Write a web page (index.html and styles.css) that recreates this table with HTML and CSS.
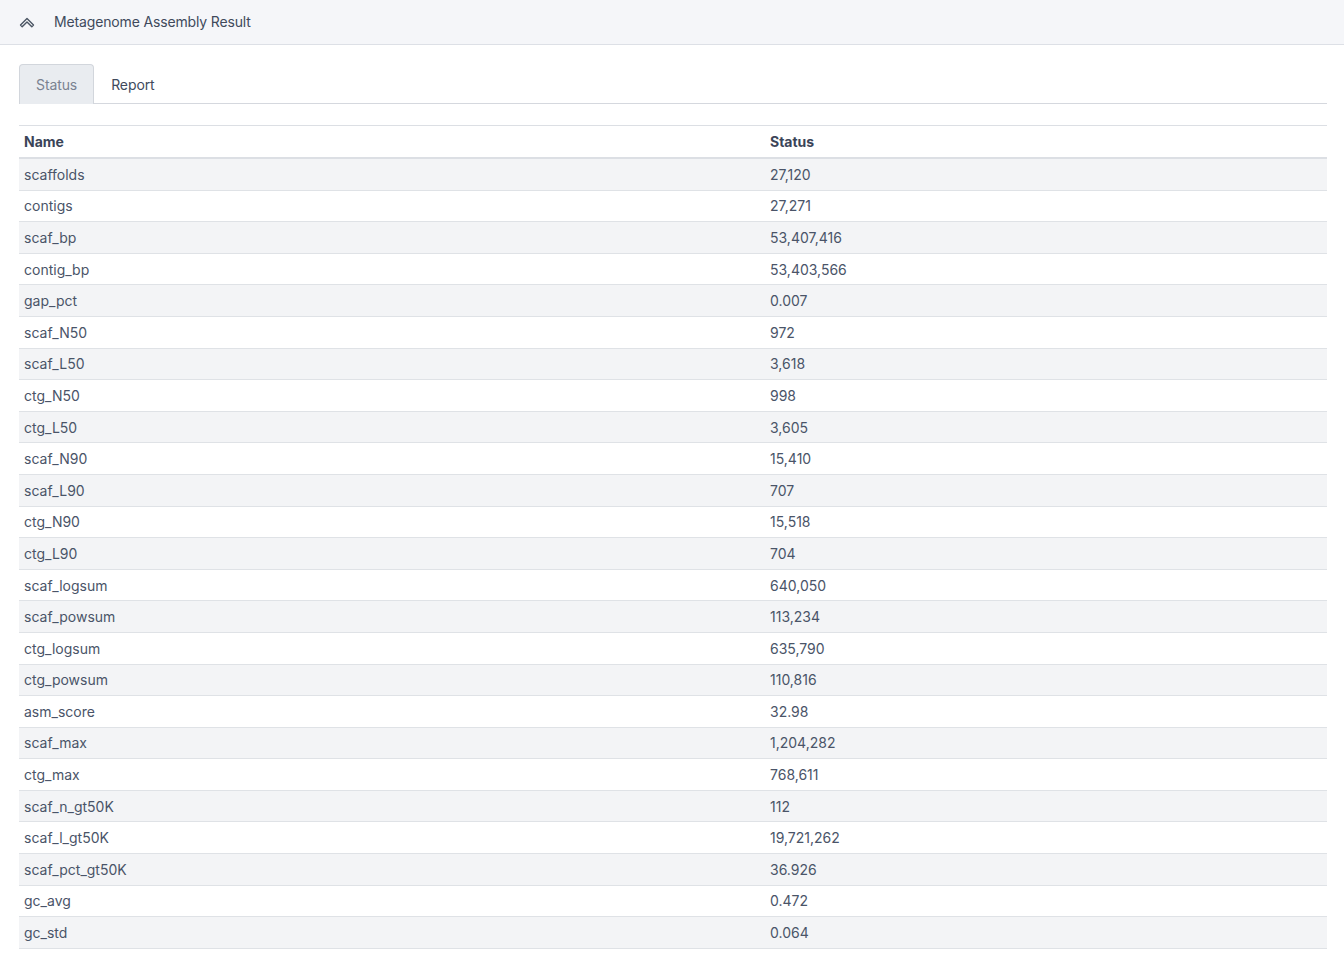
FILE: index.html
```html
<!DOCTYPE html>
<html>
<head>
<meta charset="utf-8">
<link rel="stylesheet" href="styles.css">
</head>
<body>
<header class="topbar">
  <svg class="icon" width="16" height="13" viewBox="0 0 16 13"><path d="M1.5 9 L8 2.5 L14.5 9 L12.8 10.7 L8 6 L3.2 10.7 Z" fill="none" stroke="#4b5563" stroke-width="1.4" stroke-linejoin="round"/></svg>
  <span class="title">Metagenome Assembly Result</span>
</header>
<main class="content">
  <nav class="tabs">
    <div class="tab active">Status</div>
    <div class="tab">Report</div>
  </nav>
  <table class="data">
    <thead><tr><th class="c1">Name</th><th>Status</th></tr></thead>
    <tbody>
      <tr><td>scaffolds</td><td>27,120</td></tr>
      <tr><td>contigs</td><td>27,271</td></tr>
      <tr><td>scaf_bp</td><td>53,407,416</td></tr>
      <tr><td>contig_bp</td><td>53,403,566</td></tr>
      <tr><td>gap_pct</td><td>0.007</td></tr>
      <tr><td>scaf_N50</td><td>972</td></tr>
      <tr><td>scaf_L50</td><td>3,618</td></tr>
      <tr><td>ctg_N50</td><td>998</td></tr>
      <tr><td>ctg_L50</td><td>3,605</td></tr>
      <tr><td>scaf_N90</td><td>15,410</td></tr>
      <tr><td>scaf_L90</td><td>707</td></tr>
      <tr><td>ctg_N90</td><td>15,518</td></tr>
      <tr><td>ctg_L90</td><td>704</td></tr>
      <tr><td>scaf_logsum</td><td>640,050</td></tr>
      <tr><td>scaf_powsum</td><td>113,234</td></tr>
      <tr><td>ctg_logsum</td><td>635,790</td></tr>
      <tr><td>ctg_powsum</td><td>110,816</td></tr>
      <tr><td>asm_score</td><td>32.98</td></tr>
      <tr><td>scaf_max</td><td>1,204,282</td></tr>
      <tr><td>ctg_max</td><td>768,611</td></tr>
      <tr><td>scaf_n_gt50K</td><td>112</td></tr>
      <tr><td>scaf_l_gt50K</td><td>19,721,262</td></tr>
      <tr><td>scaf_pct_gt50K</td><td>36.926</td></tr>
      <tr><td>gc_avg</td><td>0.472</td></tr>
      <tr><td>gc_std</td><td>0.064</td></tr>
    </tbody>
  </table>
</main>
</body>
</html>
```
FILE: styles.css
```css
* { box-sizing: border-box; }
html, body { margin: 0; padding: 0; background: #fff; }
body {
  font-family: Inter, "Liberation Sans", sans-serif;
  font-size: 14px;
  color: #475065;
}
.topbar {
  height: 45px;
  background: #f5f6f9;
  border-bottom: 1px solid #dde0e6;
  display: flex;
  align-items: center;
  padding-left: 19px;
  gap: 19px;
}
.icon { display: block; margin-top: 1px; }
.title { color: #404a5c; font-size: 14px; letter-spacing: -0.15px; margin-top: -1px; }
.content { padding: 20px 17px 0 19px; }
.tabs {
  display: flex;
  border-bottom: 1px solid #d5d8de;
  height: 39px;
  align-items: flex-end;
}
.tab {
  height: 40px;
  padding: 0 16px;
  display: flex;
  align-items: center;
  color: #404a5c;
  border: 1px solid transparent;
  border-bottom: none;
  border-radius: 4px 4px 0 0;
  margin-bottom: -1px;
  letter-spacing: -0.1px;
}
.tab.active {
  background: #e9ecf0;
  border-color: #d2d6dc;
  color: #7a8291;
}
.data {
  width: 100%;
  border-collapse: collapse;
  margin-top: 21px;
  border-top: 1px solid #dcdfe4;
}
.data th, .data td {
  text-align: left;
  padding: 4.8px 5px;
  line-height: 21px;
  font-size: 14px;
}
.data th { font-weight: 700; color: #3a4458; border-bottom: 2px solid #dcdfe4; padding-top: 5px; padding-bottom: 5px; }
.data th.c1 { width: 746px; }
.data td { border-bottom: 1px solid #dfe2e6; color: #4a5468; }
.data tbody tr:nth-child(odd) td { background: #f3f4f6; }
```
